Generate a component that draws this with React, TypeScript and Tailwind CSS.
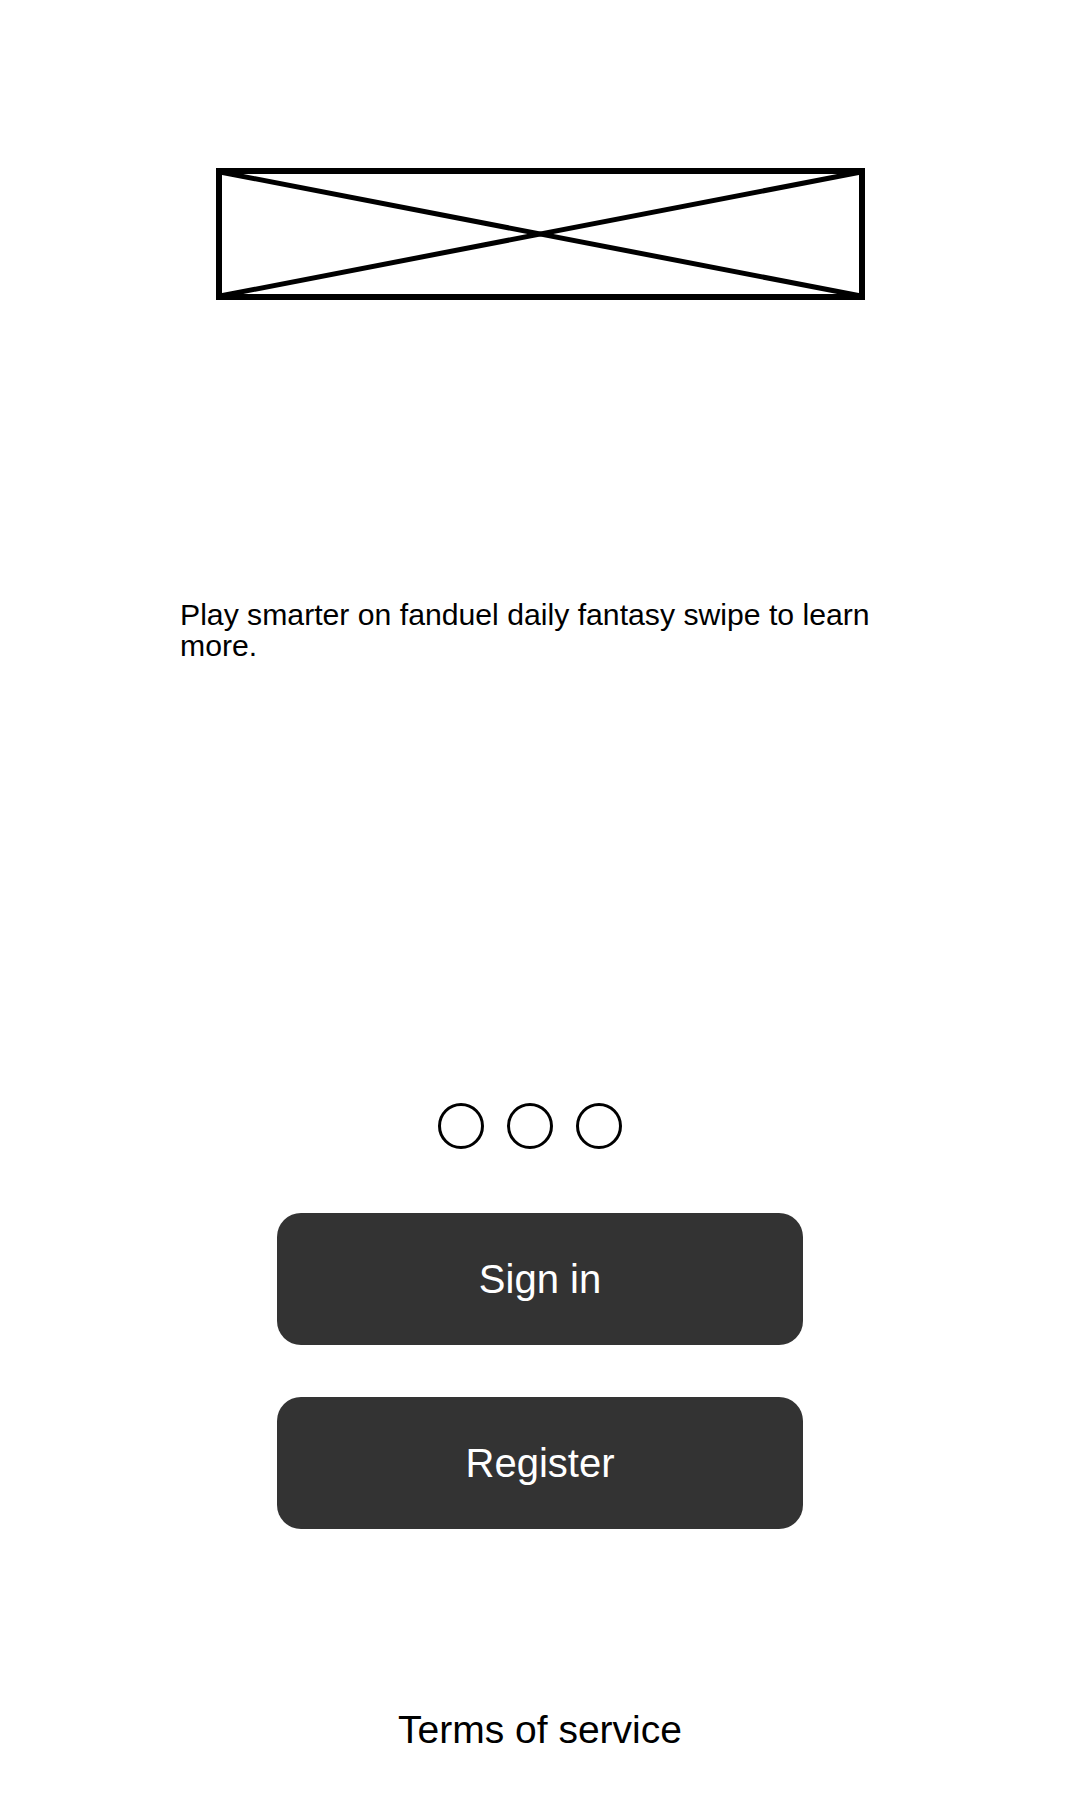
import React from "react";

function Placeholder() {
  return (
    <svg width="649" height="132" viewBox="0 0 649 132" className="block">
      <rect x="3" y="3" width="643" height="126" fill="white" stroke="black" strokeWidth="6" />
      <line x1="4" y1="4" x2="645" y2="128" stroke="black" strokeWidth="5" />
      <line x1="4" y1="128" x2="645" y2="4" stroke="black" strokeWidth="5" />
    </svg>
  );
}

export default function App() {
  return (
    <div
      className="w-[1080px] h-[1800px] bg-white flex flex-col items-center text-black"
      style={{ fontFamily: '"Liberation Sans", Arial, sans-serif' }}
    >
      <div className="mt-[168px]">
        <Placeholder />
      </div>

      <p className="mt-[299px] w-[720px] text-[30.2px] leading-[31px]">
        Play smarter on fanduel daily fantasy swipe to learn more.
      </p>

      <div className="mt-[442px] flex gap-[23px] pr-[20px]">
        <span className="w-[46px] h-[46px] rounded-full border-[3px] border-black" />
        <span className="w-[46px] h-[46px] rounded-full border-[3px] border-black" />
        <span className="w-[46px] h-[46px] rounded-full border-[3px] border-black" />
      </div>

      <button className="mt-[64px] w-[526px] h-[132px] rounded-[24px] bg-[#333333] text-white text-[40px] leading-none flex items-center justify-center">
        Sign in
      </button>
      <button className="mt-[52px] w-[526px] h-[132px] rounded-[24px] bg-[#333333] text-white text-[40px] leading-none flex items-center justify-center">
        Register
      </button>

      <a className="mt-[181px] text-[39px] leading-[39px]">Terms of service</a>
    </div>
  );
}
